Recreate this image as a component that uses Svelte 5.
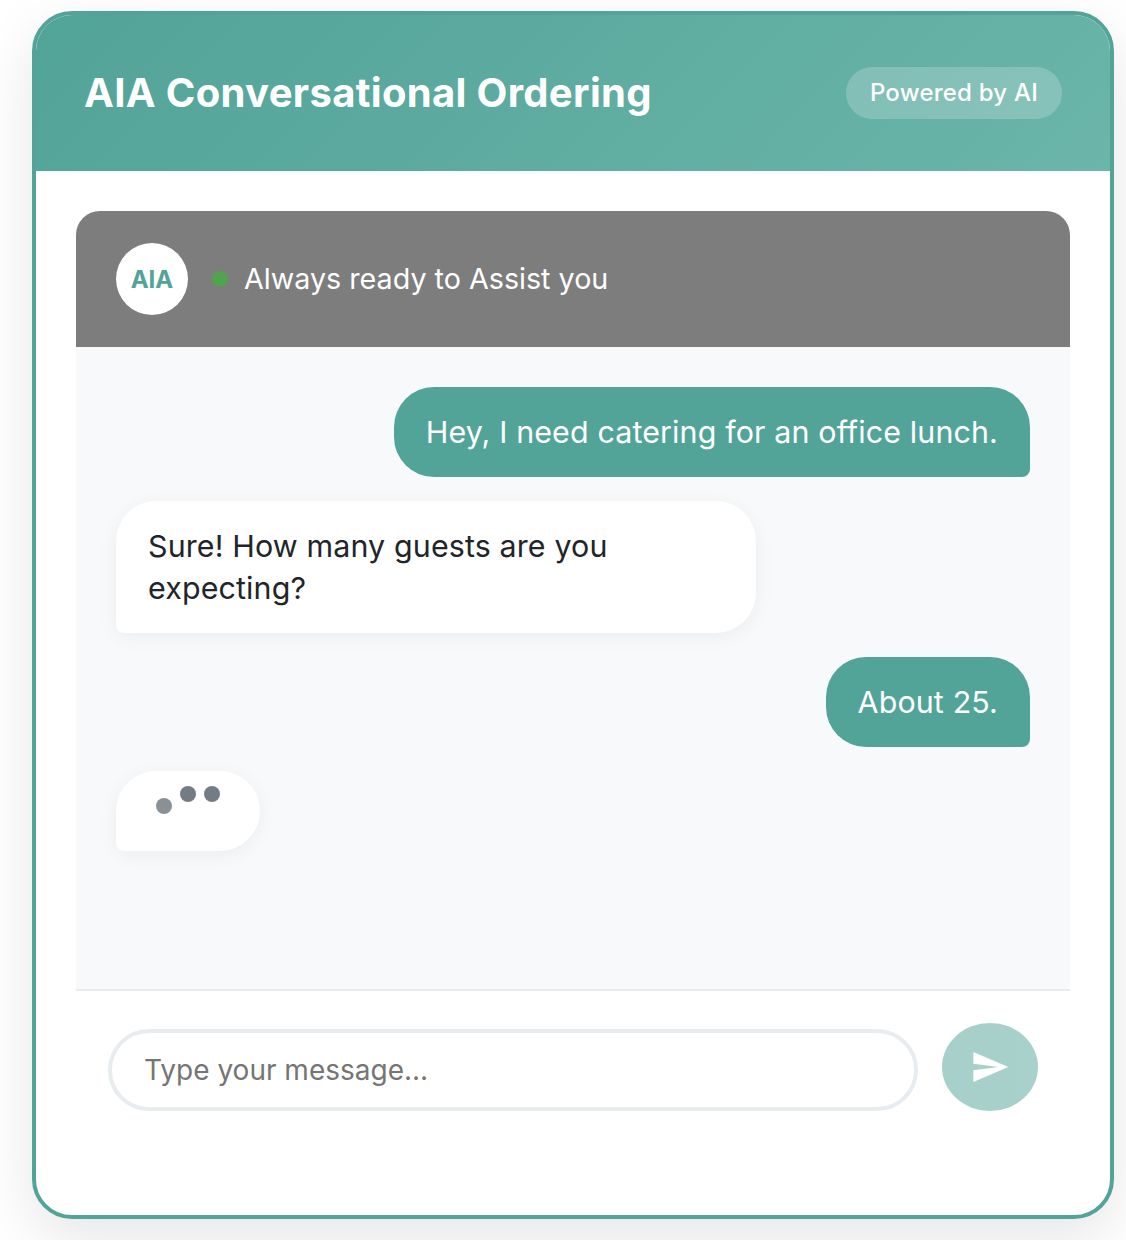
<script>
  const messages = [
    { from: 'user', text: 'Hey, I need catering for an office lunch.' },
    { from: 'bot', text: 'Sure! How many guests are you expecting?' },
    { from: 'user', text: 'About 25.' }
  ]
  let draft = $state('')
</script>

<div class="page">
  <div class="card">
    <header class="top">
      <h1>AIA Conversational Ordering</h1>
      <span class="badge">Powered by AI</span>
    </header>

    <section class="body">
      <div class="chat">
        <div class="chat-head">
          <div class="avatar">AIA</div>
          <span class="dot-online"></span>
          <span class="status">Always ready to Assist you</span>
        </div>

        <div class="messages">
          {#each messages as m}
            <div class="msg {m.from}">{m.text}</div>
          {/each}
          <div class="msg bot typing">
            <span class="t1"></span>
            <span class="t2"></span>
            <span class="t3"></span>
          </div>
        </div>

        <form class="composer" onsubmit={(e) => e.preventDefault()}>
          <input type="text" placeholder="Type your message..." bind:value={draft} />
          <button type="submit" aria-label="Send">
            <svg width="40" height="40" viewBox="0 0 24 24" fill="#fff">
              <path d="M2.01 21 23 12 2.01 3 2 10l15 2-15 2z" />
            </svg>
          </button>
        </form>
      </div>
    </section>
  </div>
</div>

<style>
  :global(body) {
    background: #fff;
  }

  .page {
    box-sizing: border-box;
    padding: 11px 12px 21px 32px;
    font-family: Inter, "Liberation Sans", sans-serif;
  }

  .card {
    box-sizing: border-box;
    height: 1208px;
    border: 4px solid #52a398;
    border-radius: 40px;
    background: #fff;
    overflow: hidden;
    box-shadow: 0 20px 60px rgba(0, 0, 0, 0.1);
    display: flex;
    flex-direction: column;
  }

  .top {
    height: 156px;
    flex: none;
    display: flex;
    align-items: center;
    justify-content: space-between;
    padding: 0 48px;
    background: linear-gradient(135deg, #52a398, #6bb5aa);
    color: #fff;
    box-sizing: border-box;
  }

  h1 {
    margin: 0;
    font-size: 40px;
    line-height: 48px;
    font-weight: 700;
    letter-spacing: 0.33px;
  }

  .badge {
    padding: 0 24px;
    height: 52px;
    line-height: 52px;
    border-radius: 26px;
    background: rgba(255, 255, 255, 0.2);
    font-size: 24px;
    letter-spacing: 0.22px;
    font-weight: 500;
  }

  .body {
    padding: 40px 40px 0;
  }

  .chat {
    border-radius: 24px 24px 0 0;
    overflow: hidden;
  }

  .chat-head {
    height: 136px;
    box-sizing: border-box;
    padding: 0 40px;
    display: flex;
    align-items: center;
    background: #7d7d7d;
    color: #fff;
  }

  .avatar {
    width: 72px;
    height: 72px;
    border-radius: 50%;
    background: #fff;
    color: #52a398;
    font-weight: 700;
    font-size: 24px;
    display: flex;
    align-items: center;
    justify-content: center;
    margin-right: 24px;
  }

  .dot-online {
    width: 16px;
    height: 16px;
    border-radius: 50%;
    background: #50a450;
    margin-right: 16px;
  }

  .status {
    font-size: 28.7px;
    padding-bottom: 2px;
  }

  .messages {
    box-sizing: border-box;
    height: 644px;
    padding: 40px;
    background: #f8f9fa;
    border-bottom: 2px solid #e9ecef;
    display: flex;
    flex-direction: column;
    gap: 24px;
  }

  .msg {
    max-width: 640px;
    box-sizing: border-box;
    padding: 24px 32px;
    font-size: 30.4px;
    line-height: 42px;
    letter-spacing: 0.14px;
  }

  .msg.user {
    align-self: flex-end;
    background: #52a398;
    color: #fff;
    border-radius: 40px 40px 8px 40px;
  }

  .msg.bot {
    align-self: flex-start;
    background: #fff;
    color: #212529;
    border-radius: 40px 40px 40px 8px;
    box-shadow: 0 4px 20px rgba(0, 0, 0, 0.05);
  }

  .typing {
    display: flex;
    gap: 8px;
    padding: 32px 40px;
    height: 80px;
  }

  .typing span {
    width: 16px;
    height: 16px;
    border-radius: 50%;
    background: #6c757d;
  }

  /* bounce animation, frozen */
  .t1 {
    transform: translateY(-5px);
    opacity: 0.8;
  }

  .t2,
  .t3 {
    transform: translateY(-17px);
    opacity: 0.95;
  }

  .composer {
    display: flex;
    align-items: flex-end;
    gap: 24px;
    padding: 32px;
  }

  input {
    flex: 1;
    min-width: 0;
    box-sizing: border-box;
    height: 82px;
    padding: 0 32px;
    border: 4px solid #e9ecef;
    border-radius: 41px;
    font: inherit;
    font-size: 28px;
    color: #212529;
    background: #fff;
    outline: none;
  }

  input::placeholder {
    color: #757575;
    opacity: 1;
  }

  button {
    width: 96px;
    height: 88px;
    flex: none;
    border: none;
    padding: 0;
    border-radius: 50%;
    background: #52a398;
    opacity: 0.5;
    display: flex;
    align-items: center;
    justify-content: center;
  }
</style>
